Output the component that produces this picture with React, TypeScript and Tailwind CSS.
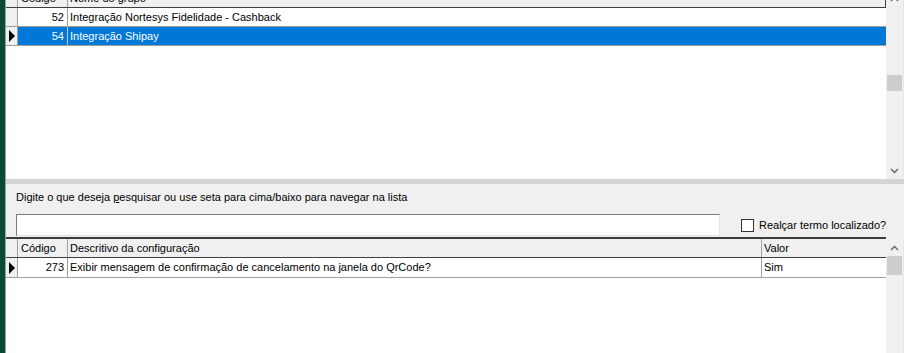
import React from 'react';

const gridLine = 'border-[#a0a0a0]';

function Chevron({ up }: { up?: boolean }) {
  return (
    <svg width="9" height="6" viewBox="0 0 9 6" className="block">
      <path
        d={up ? 'M1 5 L4.5 1.5 L8 5' : 'M1 1 L4.5 4.5 L8 1'}
        fill="none"
        stroke="#606060"
        strokeWidth="1.3"
      />
    </svg>
  );
}

function RowMarker() {
  return (
    <svg width="6" height="12" viewBox="0 0 6 12" className="block">
      <polygon points="0,0 6,6 0,12" fill="#000" />
    </svg>
  );
}

interface GroupRow {
  code: number;
  name: string;
  selected?: boolean;
}

const groups: GroupRow[] = [
  { code: 52, name: 'Integração Nortesys Fidelidade - Cashback' },
  { code: 54, name: 'Integração Shipay', selected: true },
];

function TopGrid() {
  return (
    <div className="h-[179px] flex shrink-0">
      <div className="flex-1 bg-white flex flex-col overflow-hidden">
        {/* header, scrolled partly out of view */}
        <div className="h-[18px] -mt-[10px] flex shrink-0 bg-[#f0f0f0] border-b border-b-[#404040] border-r border-r-[#404040]">
          <div className={`w-[12px] border-r ${gridLine}`} />
          <div className={`w-[50px] pl-[3px] leading-[17px] border-r ${gridLine}`}>Código</div>
          <div className="flex-1 pl-[2px] leading-[17px]">Nome do grupo</div>
        </div>
        {groups.map((g) => (
          <div key={g.code} className={`h-[19px] flex shrink-0 border-b ${gridLine}`}>
            <div className={`w-[12px] bg-[#f0f0f0] border-r ${gridLine} flex items-center pl-[3px]`}>
              {g.selected && <RowMarker />}
            </div>
            <div
              className={`w-[50px] text-right pr-[3px] leading-[18px] border-r ${
                g.selected ? 'bg-[#0078d7] text-white border-[#c8c8c8]' : 'border-[#a0a0a0]'
              }`}
            >
              {g.code}
            </div>
            <div
              className={`flex-1 pl-[2px] leading-[18px] ${
                g.selected ? 'bg-[#0078d7] text-white' : ''
              }`}
            >
              {g.name}
            </div>
          </div>
        ))}
      </div>
      <div className="w-[18px] flex flex-col bg-[#f0f0f0] border-r border-[#e6e6e6]">
        <div className="h-[17px] -mt-[10px] flex items-center justify-center shrink-0">
          <Chevron up />
        </div>
        <div className="mt-[68px] mx-[1px] h-[16px] bg-[#cdcdcd] shrink-0" />
        <div className="flex-1" />
        <div className="h-[17px] flex items-center justify-center shrink-0">
          <Chevron />
        </div>
      </div>
    </div>
  );
}

function SearchPanel() {
  return (
    <div className="h-[53px] shrink-0 bg-[#f0f0f0] flex flex-col pl-[10px] pt-[7px]">
      <div className="leading-[13px]">
        Digite o que deseja <span className="underline">p</span>esquisar ou use seta para cima/baixo para navegar na lista
      </div>
      <div className="flex items-center mt-[10px]">
        <input
          className="w-[704px] h-[22px] bg-white border border-t-[#7a7a7a] border-l-[#7a7a7a] border-b-[#e3e3e3] border-r-[#e3e3e3] outline-none"
          readOnly
        />
        <div className="ml-[21px] w-[13px] h-[13px] bg-white border border-[#333333]" />
        <span className="ml-[5px]">Realçar termo localizado?</span>
      </div>
    </div>
  );
}

function BottomGrid() {
  return (
    <div className="flex-1 flex min-h-0">
      <div className="flex-1 bg-white flex flex-col border-t-2 border-t-[#3c3c3c] overflow-hidden">
        <div className="h-[19px] flex shrink-0 bg-[#f0f0f0] border-b border-b-[#404040]">
          <div className={`w-[12px] border-r ${gridLine}`} />
          <div className={`w-[50px] pl-[3px] leading-[18px] border-r ${gridLine}`}>Código</div>
          <div className={`w-[694px] pl-[2px] leading-[18px] border-r ${gridLine}`}>
            Descritivo da configuração
          </div>
          <div className="flex-1 pl-[2px] leading-[18px]">Valor</div>
        </div>
        <div className={`h-[20px] flex shrink-0 border-b ${gridLine}`}>
          <div className={`w-[12px] bg-[#f0f0f0] border-r ${gridLine} flex items-center pl-[3px]`}>
            <RowMarker />
          </div>
          <div className={`w-[50px] text-right pr-[3px] leading-[19px] border-r ${gridLine}`}>273</div>
          <div className={`w-[694px] pl-[2px] leading-[19px] border-r ${gridLine}`}>
            Exibir mensagem de confirmação de cancelamento na janela do QrCode?
          </div>
          <div className="flex-1 pl-[2px] leading-[19px]">Sim</div>
        </div>
      </div>
      <div className="w-[18px] mt-[2px] flex flex-col bg-[#f0f0f0] border-r border-[#e6e6e6]">
        <div className="h-[17px] flex items-center justify-center shrink-0">
          <Chevron up />
        </div>
        <div className="mx-[1px] h-[19px] bg-[#cdcdcd] shrink-0" />
        <div className="flex-1" />
      </div>
    </div>
  );
}

export default function App() {
  return (
    <div className="w-[904px] h-[353px] flex overflow-hidden bg-[#f0f0f0] text-[11px] text-black font-['Liberation_Sans',Arial,sans-serif]">
      <div className="w-[5px] shrink-0 bg-[#0b4a3b]" />
      <div className="w-px shrink-0 bg-[#a0a0a0]" />
      <div className="flex-1 flex flex-col min-w-0">
        <TopGrid />
        <div className="h-[5px] shrink-0 bg-[#d4d4d4]" />
        <SearchPanel />
        <BottomGrid />
      </div>
    </div>
  );
}
